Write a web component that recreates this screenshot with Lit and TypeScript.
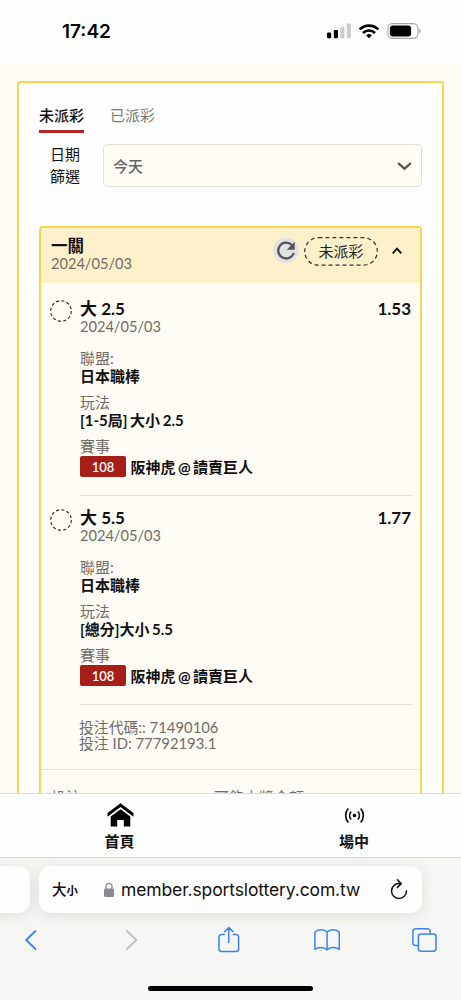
import { LitElement, html, css, svg } from "lit";
import { customElement, property } from "lit/decorators.js";

interface Bet {
  pick: string;
  date: string;
  odds: string;
  league: string;
  play: string;
  code: string;
  match: string;
}

const bets: Bet[] = [
  { pick: "大 2.5", date: "2024/05/03", odds: "1.53", league: "日本職棒", play: "[1-5局] 大小 2.5", code: "108", match: "阪神虎 @ 讀賣巨人" },
  { pick: "大 5.5", date: "2024/05/03", odds: "1.77", league: "日本職棒", play: "[總分]大小 5.5", code: "108", match: "阪神虎 @ 讀賣巨人" },
];

@customElement("status-bar")
class StatusBar extends LitElement {
  static styles = css`
    :host { display: flex; justify-content: space-between; box-sizing: border-box; height: 64px; padding: 20px 40px 0 62px; background: #fefefe; flex: none; }
    .time { font: 600 19px/23px Inter, sans-serif; letter-spacing: 0; color: #000; }
    svg { display: block; margin-top: 2px; }
  `;
  render() {
    return html`
      <span class="time">17:42</span>
      <svg width="95" height="18" viewBox="326 22 95 18">
        <rect x="327" y="32.4" width="4.2" height="5.8" rx="1.2" />
        <rect x="333.8" y="30" width="4.2" height="8.2" rx="1.2" />
        <rect x="340.3" y="26.8" width="4.2" height="11.4" rx="1.2" fill="#ccc" />
        <rect x="346.8" y="23.6" width="4.2" height="14.6" rx="1.2" fill="#ccc" />
        <g fill="none" stroke="#000" stroke-width="2.7">
          <path d="M359.7 29.4a13.2 13.2 0 0 1 18.6 0" />
          <path d="M363 33a8.5 8.5 0 0 1 12 0" />
        </g>
        <path d="M369 38.3l-2.8-2.9a4 4 0 0 1 5.6 0z" />
        <rect x="387.9" y="23.6" width="30" height="14.8" rx="4.6" fill="none" stroke="#a6a6a6" stroke-width="1.1" />
        <rect x="389.9" y="25.5" width="21.2" height="11" rx="3" />
        <path d="M419.2 28.7c2 .8 2 3.8 0 4.6z" fill="#a6a6a6" />
      </svg>
    `;
  }
}

@customElement("bet-item")
class BetItem extends LitElement {
  @property({ attribute: false }) bet!: Bet;
  static styles = css`
    :host { display: flex; box-sizing: border-box; height: 209px; padding: 12px 7px 0 9px; }
    .ring { flex: none; margin: 1px 8px 0 0; }
    .main { flex: 1; border-bottom: 1px solid #e4e2dc; line-height: 18px; }
    .head { display: flex; justify-content: space-between; padding: 1px 2px 0 0; font-size: 17px; font-weight: 700; color: #111; }
    .date, .label { color: #6f6d69; }
    .date { margin-bottom: 13px; font-size: 14.6px; }
    .value { font-weight: 700; color: #111; margin-bottom: 8px; word-spacing: -1px; }
    .match { display: flex; align-items: center; gap: 4.500px; height: 21px; margin-top: 1px; font-weight: 700; color: #111; white-space: nowrap; word-spacing: -1.2px; }
    .code { width: 46px; height: 21px; border-radius: 2px; background: #a51e17; color: #fff; font-size: 13px; font-weight: 600; line-height: 22px; text-align: center; }
  `;
  render() {
    const b = this.bet;
    return html`
      <svg class="ring" width="22" height="22" viewBox="0 0 22 22">
        <circle cx="11" cy="11" r="10.3" fill="none" stroke="#222" stroke-width="1.1" stroke-dasharray="3.1 2.29" />
      </svg>
      <div class="main">
        <div class="head"><span>${b.pick}</span><span>${b.odds}</span></div>
        <div class="date">${b.date}</div>
        <div class="label">聯盟:</div>
        <div class="value">${b.league}</div>
        <div class="label">玩法</div>
        <div class="value">${b.play}</div>
        <div class="label">賽事</div>
        <div class="match"><span class="code">${b.code}</span><span>${b.match}</span></div>
      </div>
    `;
  }
}

@customElement("bet-slip")
class BetSlip extends LitElement {
  static styles = css`
    :host { display: block; border: 2px solid #f6d750; border-radius: 4px; background: #fffcf5; overflow: hidden; }
    .header { display: flex; box-sizing: border-box; height: 55px; padding: 9px 17px 0 10px; background: #fbf0ca; }
    .titles { flex: 1; line-height: 18px; color: #6f6d69; }
    .title { font-size: 16.5px; font-weight: 700; color: #111; }
    .date { font-size: 14.6px; line-height: 17px; }
    .refresh { flex: none; margin: -1px 5px 0 0; }
    .badge { position: relative; display: flex; justify-content: center; flex: none; width: 74px; height: 29px; line-height: 28px; color: #222; }
    .outline { position: absolute; inset: 0; }
    .caret { flex: none; margin: 9px 0 0 13px; }
    .items { padding-top: 4px; }
    .ids { box-sizing: border-box; height: 65px; padding: 14px 0 0 38px; line-height: 16px; font-size: 14.85px; color: #6f6d69; border-bottom: 1px solid #e4e2dc; }
    .totals { display: grid; grid-template-columns: 163px 1fr; padding: 18px 10px 30px; line-height: 18px; color: #6f6d69; }
  `;
  render() {
    return html`
      <div class="header">
        <div class="titles"><div class="title">一關</div><div class="date">2024/05/03</div></div>
        <svg class="refresh" width="26" height="28" viewBox="0 0 26 28">
          <circle cx="13" cy="14.5" r="12.7" fill="#e1e2e4" />
          <path d="M18.8 9A7.9 7.900 0 1 0 20.700 17" fill="none" stroke="#555" stroke-width="2.3" />
          <path d="M21.700 5.800v8h-8z" fill="#555" />
        </svg>
        <div class="badge">
          <svg class="outline" width="74" height="29" viewBox="0 0 74 29">
            <rect x=".7" y=".7" width="72.6" height="27.4" rx="13.7" fill="none" stroke="#333" stroke-width="1.2" stroke-dasharray="4 3" />
          </svg>
          <span>未派彩</span>
        </div>
        <svg class="caret" width="12" height="10" viewBox="0 0 12 10">
          <path d="M1.7 7.3L6 2.7l4.3 4.6" fill="none" stroke="#111" stroke-width="1.9" />
        </svg>
      </div>
      <div class="items">${bets.map((b) => html`<bet-item .bet=${b}></bet-item>`)}</div>
      <div class="ids"><div>投注代碼:: 71490106</div><div>投注 ID: 77792193.1</div></div>
      <div class="totals"><span>投注</span><span>可能中獎金額</span></div>
    `;
  }
}

@customElement("site-nav")
class SiteNav extends LitElement {
  static styles = css`
    :host { display: grid; grid-template-columns: 239px 1fr; box-sizing: border-box; height: 64px; flex: none; background: #fefefe; border-top: 1px solid #dddcd9; }
    .tab { display: flex; flex-direction: column; align-items: center; padding-top: 8px; font-weight: 600; line-height: 20px; color: #111; }
    .tab:last-child { padding-left: 8px; }
    svg { margin-bottom: 3px; }
  `;
  render() {
    return html`
      <div class="tab">
        <svg width="28" height="26" viewBox="0 0 28 26">
          <path d="M14.500 1.2L27.500 11v3.7L14.500 5.1 1.500 14.7V11z" />
          <path d="M14.500 7.2l9.8 7.2v10.1h-6.5v-6.6h-6.600v6.600H4.700V14.4z" />
        </svg>
        <span>首頁</span>
      </div>
      <div class="tab">
        <svg width="28" height="26" viewBox="0 0 28 26">
          <circle cx="14.500" cy="13.5" r="1.8" />
          <g fill="none" stroke="#111" stroke-width="1.7">
            <path d="M11.100 9.500a6.2 6.2 0 0 0 0 8M17.900 9.500a6.2 6.2 0 0 1 0 8" />
            <path d="M8.300 6.5a10.6 10.6 0 0 0 0 14M20.700 6.5a10.6 10.6 0 0 1 0 14" />
          </g>
        </svg>
        <span>場中</span>
      </div>
    `;
  }
}

@customElement("browser-bar")
class BrowserBar extends LitElement {
  static styles = css`
    :host { display: flex; flex-direction: column; box-sizing: border-box; height: 143px; flex: none; background: #f6f6f4; border-top: 1px solid #d9d9d6; overflow: hidden; font-family: Inter, "Noto Sans CJK TC", sans-serif; }
    .pills { display: flex; gap: 9px; padding-top: 8px; }
    .pill { box-sizing: border-box; height: 47px; background: #fdfdfd; border-radius: 12px; box-shadow: 0 2px 14px rgba(60, 60, 30, 0.13); }
    .prev { width: 60px; margin-left: -30px; }
    .address { display: flex; align-items: center; width: 383px; padding: 0 13px 0 13px; color: #111; }
    .big { font-size: 14.500px; font-weight: 500; }
    .small { font-size: 11.5px; font-weight: 700; padding-top: 3px; }
    .lock { margin: 0 6px 0 25px; }
    .url { flex: 1; font-size: 17.5px; letter-spacing: -0.12px; white-space: nowrap; }
    .tools { display: flex; justify-content: space-between; padding: 13px 23px 0 18px; }
    .tools svg { fill: none; stroke: #3b82f7; stroke-width: 1.5; stroke-linecap: round; stroke-linejoin: round; }
    .tools .off { stroke: #bfbfbf; }
    .home { width: 165px; height: 5px; border-radius: 3px; background: #000; margin: 32px 0 0 148px; }
  `;
  render() {
    const icon = (body: unknown, cls = "") => html`<svg class=${cls} width="26" height="28" viewBox="0 0 26 28">${body}</svg>`;
    return html`
      <div class="pills">
        <div class="pill prev"></div>
        <div class="pill address">
          <span class="big">大</span><span class="small">小</span>
          <svg class="lock" width="12" height="16" viewBox="0 0 12 16">
            <rect x="1" y="6.4" width="10" height="8.6" rx="1.5" fill="#8b8b8f" />
            <path d="M3 7V4.4a3 3 0 0 1 6 0V7" fill="none" stroke="#8b8b8f" stroke-width="1.3" />
          </svg>
          <span class="url">member.sportslottery.com.tw</span>
          <svg width="20" height="24" viewBox="0 0 20 24" fill="none" stroke="#111" stroke-width="1.5" stroke-linecap="round" stroke-linejoin="round">
            <path d="M11.6 5.5H10a7.5 7.5 0 1 0 7.5 7.5M8.4 1.8l3.9 3.8-3.9 3.8" />
          </svg>
        </div>
      </div>
      <div class="tools">
        ${icon(svg`<path d="M17.5 5l-9.3 9 9.3 9" stroke-width="1.8" />`)}
        ${icon(svg`<path d="M10 5l9.3 9-9.3 9" stroke-width="1.8" />`, "off")}
        ${icon(svg`<path d="M9.2 8.6H6.4a2.4 2.4 0 0 0-2.4 2.4v12a2.4 2.4 0 0 0 2.4 2.4h14.8a2.4 2.4 0 0 0 2.4-2.4V11a2.4 2.4 0 0 0-2.4-2.4h-2.8M13.8 16.5V1.9M9.7 5.6l4.1-4 4.1 4" />`)}
        ${icon(svg`<path d="M13.1 6v17.9M13.1 6C10.5 2.900 4 2.900 .9 6v17.300c3.200-2.400 9.500-2.400 12.200.6 2.700-3 9-3 12.200-.6V6c-3.100-3.100-9.600-3.100-12.200 0z" />`)}
        ${icon(svg`<path d="M6.300 19.500H3.600A2.700 2.700 0 0 1 .9 16.800V5.500a2.700 2.700 0 0 1 2.700-2.700h11.700A2.700 2.700 0 0 1 18 5.500v2.300" /><rect x="6.400" y="8" width="17.600" height="17.200" rx="2.700" />`)}
      </div>
      <div class="home"></div>
    `;
  }
}

@customElement("app-root")
class AppRoot extends LitElement {
  static styles = css`
    :host { display: flex; flex-direction: column; height: 1000px; overflow: hidden; font: 400 15px/18px Lato, "Noto Sans CJK TC", sans-serif; color: #111; }
    .page { flex: 1; min-height: 0; box-sizing: border-box; padding: 17px 17px 0; overflow: hidden; background: #fffbf4; }
    .panel { border: 2px solid #f6d750; border-radius: 4px; background: #fefefe; padding: 20px 20px 0; }
    .tabs { display: flex; gap: 26px; line-height: 24px; }
    .tab { box-sizing: border-box; height: 30px; color: #777; }
    .on { border-bottom: 3px solid #b52623; color: #111; font-weight: 500; }
    .filter { display: flex; margin: 11px 0 39px; }
    .name { width: 30px; margin: 0 23px 0 11px; line-height: 21.5px; }
    .select { display: flex; flex: 1; align-items: center; justify-content: space-between; box-sizing: border-box; height: 43px; padding: 0 9px; border: 1px solid #e4e0d8; border-radius: 4px; background: #fffcf5; color: #666; font-weight: 500; }
  `;
  render() {
    return html`
      <status-bar></status-bar>
      <div class="page">
        <div class="panel">
          <div class="tabs"><span class="tab on">未派彩</span><span class="tab">已派彩</span></div>
          <div class="filter">
            <div class="name">日期篩選</div>
            <div class="select">
              <span>今天</span>
              <svg width="15" height="10" viewBox="0 0 15 10"><path d="M1.800 2.700l5.700 5.100 5.700-5.100" fill="none" stroke="#555" stroke-width="2.3" stroke-linecap="round" /></svg>
            </div>
          </div>
          <bet-slip></bet-slip>
        </div>
      </div>
      <site-nav></site-nav>
      <browser-bar></browser-bar>
    `;
  }
}
